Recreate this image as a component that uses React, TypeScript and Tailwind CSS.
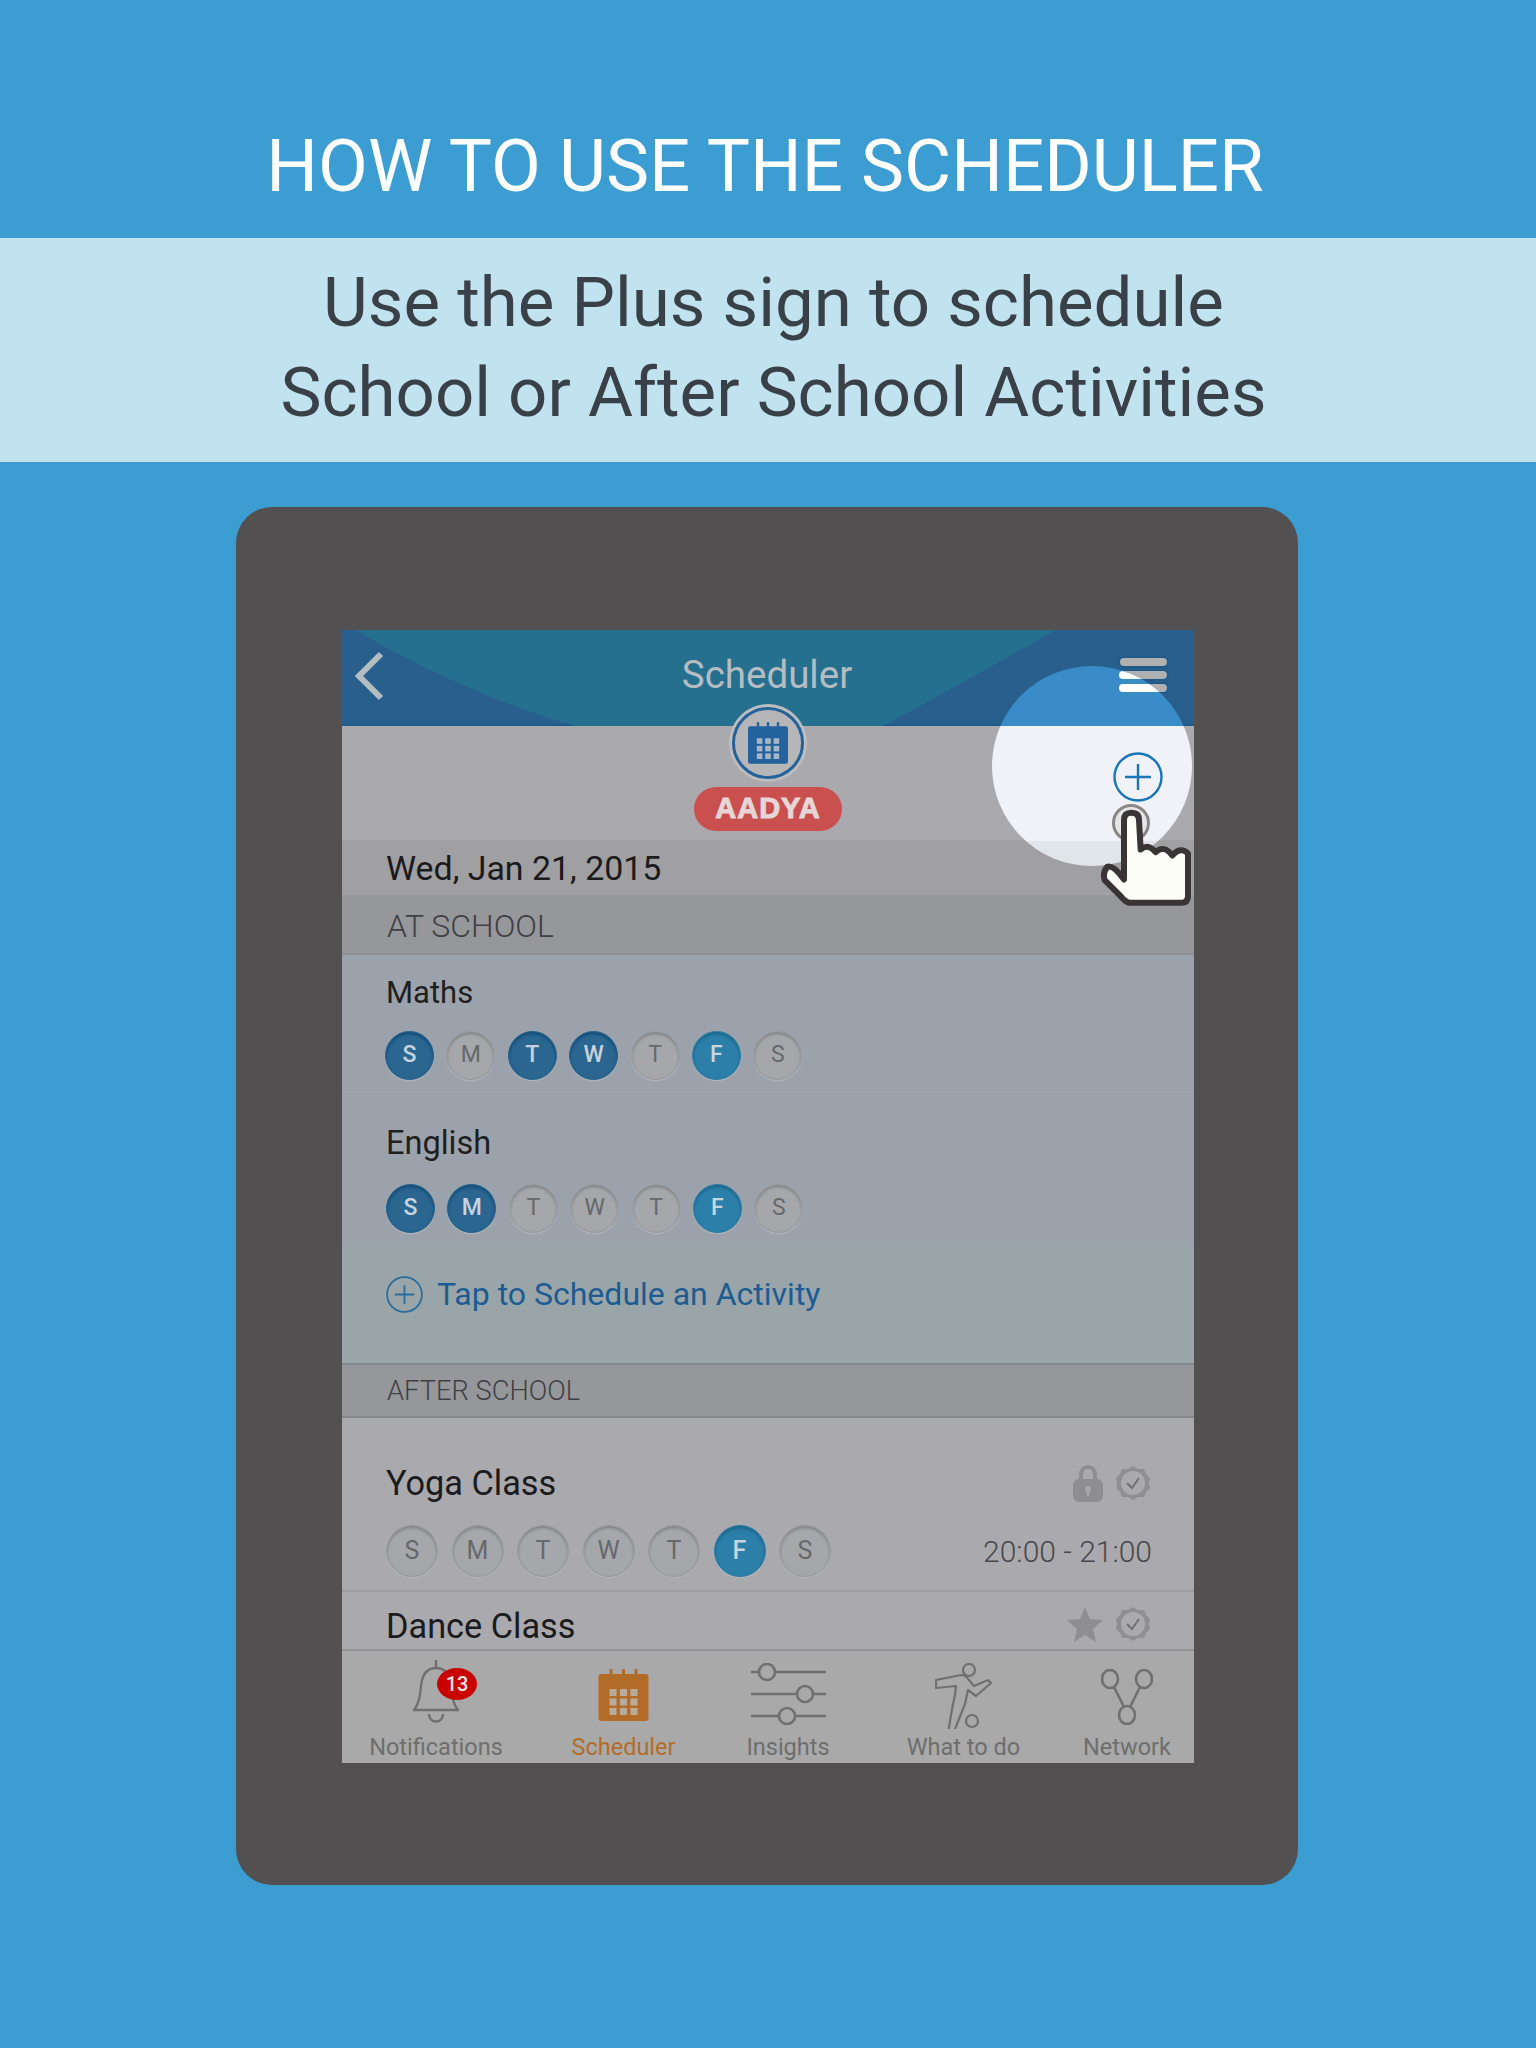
const maths = [true, false, true, true, false, "f", false];
const english = [true, true, false, false, false, "f", false];
const yoga = [false, false, false, false, false, "f", false];
const letters = ["S", "M", "T", "W", "T", "F", "S"];

function Days({ on, big }: { on: (boolean | string)[]; big?: boolean }) {
  return (
    <div className={big ? "flex gap-[13.5px]" : "flex gap-[12.4px]"}>
      {letters.map((l, i) => {
        const size = big ? "w-[52px] h-[52px] text-[25px]" : "w-[49px] h-[49px] text-[23px]";
        const tone =
          on[i] === "f"
            ? "bg-[#2b7fa9] border-[#2a7aa3] text-[#c4d6e0] font-medium shadow-[inset_0_2px_3px_#1c6288,0_1px_1px_#b5b8bd]"
            : on[i]
              ? "bg-[#2a6690] border-[#225f8b] text-[#c6d3de] font-medium shadow-[inset_0_2px_3px_#124a74,0_1px_1px_#b5b8bd]"
              : "bg-[#a5a7ab] border-[#96989c] text-[#66686c] shadow-[inset_0_2px_3px_#7f8185,0_1px_1px_#b5b8bd]";
        return (
          <div key={i} className={`${size} ${tone} flex items-center justify-center rounded-full border`}>
            {l}
          </div>
        );
      })}
    </div>
  );
}

function Badge() {
  return (
    <svg width="38" height="38" viewBox="0 0 38 38" fill="none">
      <path
        d="M19 2l5 3 6 0 2 5 4 4-1 5 1 5-4 4-2 5-6 0-5 3-5-3-6 0-2-5-4-4 1-5-1-5 4-4 2-5 6 0z"
        fill="#8f8f93"
      />
      <circle cx="19" cy="19" r="12" fill="#a9a9ae" />
      <path d="M13 19l5 5 7-10" stroke="#6f6f73" strokeWidth="2" />
    </svg>
  );
}

function CalendarGlyph({ w, h, fill, dot }: { w: number; h: number; fill: string; dot: string }) {
  const cells = [];
  for (let r = 0; r < 3; r++) {
    for (let c = 0; c < 3; c++) {
      cells.push(<rect key={`${r}${c}`} x={11 + c * 10.5} y={20 + r * 9.5} width="7" height="7" fill={dot} />);
    }
  }
  return (
    <svg width={w} height={h} viewBox="0 0 50 52">
      <rect x="0" y="5" width="50" height="47" rx="3" fill={fill} />
      <rect x="11" y="0" width="3" height="8" fill={fill} />
      <rect x="23.5" y="0" width="3" height="8" fill={fill} />
      <rect x="36" y="0" width="3" height="8" fill={fill} />
      {cells}
    </svg>
  );
}

function PlusCircle({ size, stroke }: { size: number; stroke: string }) {
  return (
    <svg width={size} height={size} viewBox="0 0 50 50" fill="none" stroke={stroke} strokeWidth="2.4">
      <circle cx="25" cy="25" r="23.5" />
      <path d="M25 12v26M12 25h26" />
    </svg>
  );
}

function NavItem({ w, pad, label, active, children }: { w: string; pad: string; label: string; active?: boolean; children: React.ReactNode }) {
  return (
    <div className={`${w} flex flex-col items-center`}>
      <div className={`h-[82px] flex justify-center ${pad}`}>{children}</div>
      <div className={active ? "text-[23.5px] leading-[28px] text-[#b36c28]" : "text-[23.5px] leading-[28px] text-[#6e6e6e]"}>{label}</div>
    </div>
  );
}

export default function App() {
  return (
    <div className="w-[1536px] h-[2048px] bg-[#3b9dd1] font-['Roboto',sans-serif] flex flex-col items-center overflow-hidden">
      <div className="h-[238px] w-full flex items-center justify-center pt-[96px] pr-[6px] text-white text-[72.5px] leading-none">
        HOW TO USE THE SCHEDULER
      </div>
      <div className="h-[224px] w-full bg-[#c1e2ef] flex flex-col items-center justify-center pb-[5px] pl-[11px] text-[#3a4047] text-[69px] leading-[90px]">
        <div>Use the Plus sign to schedule</div>
        <div>School or After School Activities</div>
      </div>

      {/* tablet */}
      <div className="mt-[45px] mr-[2px] w-[1062px] h-[1378px] rounded-[36px] bg-[#525051] pt-[123px] pl-[106px]">
        <div className="relative w-[852px] h-[1133px] flex flex-col overflow-hidden bg-[#a9a9ae]">
          <header className="relative h-[96px] shrink-0 bg-[#285f8d] border-b-2 border-[#1f5a88] flex items-start justify-between">
            <svg className="absolute inset-0" width="852" height="96" viewBox="0 0 852 96">
              <path d="M14 0C80 40 160 75 234 96H541C600 65 660 30 714 0Z" fill="#26708f" />
            </svg>
            <svg className="relative mt-[20px] ml-[11px]" width="32" height="52" viewBox="0 0 32 52" fill="none">
              <path d="M28 4L6 26l22 22" stroke="#b4bdc2" strokeWidth="6" />
            </svg>
            <div className="absolute left-0 right-[2px] top-[20px] text-center text-[#b5bdc2] text-[38.5px] leading-[50px]">Scheduler</div>
            <div className="relative mt-[28px] mr-[27px] flex flex-col gap-[5px]">
              <div className="w-[47px] h-[8px] rounded-full bg-[#b0b0b0] shadow-[0_0_0_2px_#1f5a88]" />
              <div className="w-[47px] h-[8px] rounded-full bg-[#b0b0b0] shadow-[0_0_0_2px_#1f5a88]" />
              <div className="w-[47px] h-[8px] rounded-full bg-[#b0b0b0] shadow-[0_0_0_2px_#1f5a88]" />
            </div>
          </header>

          <div className="h-[114px] shrink-0 flex flex-col items-center">
            <div className="relative -mt-[19px] w-[72px] h-[72px] rounded-full bg-[#b6b6b8] border-[3px] border-[#24629a] shadow-[0_0_0_3px_#bdbdbf] flex items-center justify-center">
              <CalendarGlyph w={40} h={44} fill="#23619f" dot="#a9b4c4" />
            </div>
            <div className="mt-[8px] w-[148px] h-[44px] rounded-full bg-[#c9504f] flex items-center justify-center font-['Liberation_Sans',sans-serif] font-bold text-[29px] tracking-[1px] text-[#e6d6d6] [-webkit-text-stroke:1px_#e6d6d6]">
              AADYA
            </div>
          </div>

          <div className="h-[57px] shrink-0 bg-[#a0a0a3] border-b-2 border-[#97979a] pl-[44px] pt-[4px] flex items-center text-[33.9px] text-[#1b1b1d]">
            Wed, Jan 21, 2015
          </div>
          <div className="h-[58px] shrink-0 bg-[#96979b] border-b-2 border-[#8c8d91] pl-[45px] pt-[1px] flex items-center text-[32px] font-light text-[#3f3f44]">
            AT SCHOOL
          </div>

          <div className="h-[138px] shrink-0 bg-[#9ba2ab] border-b border-[#a1a7af] pl-[43px] pt-[18px]">
            <div className="pl-[1px] text-[31px] leading-[40px] text-[#1f1f22]">Maths</div>
            <div className="mt-[18px]">
              <Days on={maths} />
            </div>
          </div>
          <div className="h-[151px] shrink-0 bg-[#9ba2ab] border-b border-[#a1a7af] pl-[44px] pt-[30px]">
            <div className="text-[32.5px] leading-[40px] text-[#1f1f22]">English</div>
            <div className="mt-[21px]">
              <Days on={english} />
            </div>
          </div>
          <div className="h-[119px] shrink-0 bg-[#9aa5a9] pl-[44px] pt-[32px] flex items-start gap-[14px]">
            <PlusCircle size={37} stroke="#2a6c9c" />
            <div className="text-[32px] leading-[37px] text-[#1d5c92]">Tap to Schedule an Activity</div>
          </div>

          <div className="h-[55px] shrink-0 bg-[#96979b] border-y-2 border-y-[#86898c] pl-[45px] pt-[1px] flex items-center text-[27.3px] font-light text-[#3f3f44]">
            AFTER SCHOOL
          </div>

          <div className="h-[174px] shrink-0 border-b-2 border-[#9b9ba0] pl-[44px] pr-[42px] pt-[45px]">
            <div className="flex items-center justify-between h-[40px]">
              <div className="text-[34.3px] leading-[38px] text-[#1b1b1d]">Yoga Class</div>
              <div className="flex items-center gap-[11px]">
                <svg width="30" height="38" viewBox="0 0 30 38" fill="none">
                  <path d="M8 17V10a7 7 0 0 1 14 0v7" stroke="#8e8e92" strokeWidth="4" />
                  <rect x="0" y="15" width="30" height="23" rx="6" fill="#8e8e92" />
                  <circle cx="15" cy="25" r="3" fill="#a9a9ae" />
                  <rect x="14" y="26" width="2" height="6" fill="#a9a9ae" />
                </svg>
                <Badge />
              </div>
            </div>
            <div className="mt-[22px] flex items-center justify-between">
              <Days on={yoga} big />
              <div className="text-[30px] font-light text-[#48484c]">20:00 - 21:00</div>
            </div>
          </div>
          <div className="h-[57px] shrink-0 pl-[44px] pr-[42px] pt-[14px] flex items-start justify-between overflow-hidden">
            <div className="text-[34.3px] leading-[40px] text-[#1b1b1d]">Dance Class</div>
            <div className="-mt-[1px] flex items-center gap-[11px]">
              <svg width="36" height="36" viewBox="0 0 36 36">
                <path d="M18 1l5 12 13 1-10 9 3 13-11-7-11 7 3-13L0 14l13-1z" fill="#8e8e92" />
              </svg>
              <Badge />
            </div>
          </div>

          {/* bottom tabs */}
          <nav className="h-[114px] shrink-0 bg-[#a9a9a9] border-t-2 border-[#939396] flex">
            <NavItem w="w-[188px]" pad="pt-[9px]" label="Notifications">
              <div className="relative h-[64px]">
                <svg width="46" height="64" viewBox="0 0 46 64" fill="none" stroke="#707070" strokeWidth="2.4">
                  <path d="M23 0v8M23 8c-10 0-14 8-15 18-1 10-2 18-7 24h44c-5-6-6-14-7-24-1-10-5-18-15-18z" />
                  <path d="M16 54c0 10 14 10 14 0" />
                </svg>
                <div className="absolute left-[24px] top-[8px] w-[40px] h-[32px] rounded-[50%] bg-[#c80000] flex items-center justify-center text-[20px] font-medium text-[#f0e0e0]">13</div>
              </div>
            </NavItem>
            <NavItem w="w-[187px]" pad="pt-[18px]" label="Scheduler" active>
              <CalendarGlyph w={51} h={52} fill="#b36c28" dot="#b9ab9a" />
            </NavItem>
            <NavItem w="w-[142px]" pad="pt-[12px]" label="Insights">
              <svg width="75" height="62" viewBox="0 0 75 62" fill="none" stroke="#707070" strokeWidth="2.6">
                <path d="M0 9h8M24 9h51M0 31h46M62 31h13M0 53h28M44 53h31" />
                <ellipse cx="16" cy="9" rx="8" ry="8" />
                <ellipse cx="54" cy="31" rx="8" ry="8" />
                <ellipse cx="36" cy="53" rx="8" ry="8" />
              </svg>
            </NavItem>
            <NavItem w="w-[209px]" pad="pt-[12px]" label="What to do">
              <svg width="58" height="66" viewBox="0 0 58 66" fill="none" stroke="#707070" strokeWidth="2.2" strokeLinejoin="round">
                <circle cx="34" cy="7" r="6" />
                <path d="M1 17l25-5c4 0 6 2 8 5l5 6 14-6 3 3-15 13-8-6-3 14-12 30-5-1 4-24 3-14 1-9-20 2z" />
                <circle cx="37" cy="58" r="6" />
              </svg>
            </NavItem>
            <NavItem w="w-[118px]" pad="pt-[18px]" label="Network">
              <svg width="52" height="56" viewBox="0 0 52 56" fill="none" stroke="#707070" strokeWidth="2.6">
                <ellipse cx="9" cy="10" rx="8" ry="9" />
                <ellipse cx="43" cy="10" rx="8" ry="9" />
                <ellipse cx="26" cy="46" rx="8" ry="9" />
                <path d="M13 18l10 20M39 18L29 38" />
              </svg>
            </NavItem>
          </nav>

          {/* spotlight over the plus */}
          <div className="absolute left-[650px] top-[36px] w-[200px] h-[200px] rounded-full overflow-hidden flex flex-col">
            <div className="h-[60px] shrink-0 bg-[#3a8cc8]" />
            <div className="h-[115px] shrink-0 bg-[#f1f2f7]" />
            <div className="flex-1 bg-[#e0e5e9]" />
            <div className="absolute left-[127px] -top-[8px] flex flex-col gap-[5px]">
              <div className="w-[47px] h-[8px] rounded-full bg-white" />
              <div className="w-[47px] h-[8px] rounded-full bg-white" />
              <div className="w-[47px] h-[8px] rounded-full bg-white" />
            </div>
          </div>
          <div className="absolute left-[771px] top-[122px]">
            <PlusCircle size={50} stroke="#1877b8" />
          </div>
          <div className="absolute left-[770px] top-[174px] w-[38px] h-[38px] rounded-full border-[3px] border-[#8a8684] bg-[#e6e6ea]" />
          <svg className="absolute left-[757px] top-[178px]" width="98" height="103" viewBox="415 540 294 300">
            <path
              d="M490 725L490 572Q490 550 512 550Q535 550 535 572L540 660Q562 640 585 668Q610 645 635 678Q660 650 682 672L682 800Q682 820 660 820L510 820Q495 820 480 800L432 752Q425 728 440 712Q458 705 490 750Z"
              fill="#fdfdf8"
              stroke="#3a3436"
              strokeWidth="18"
              strokeLinejoin="round"
            />
          </svg>
        </div>
      </div>
    </div>
  );
}
